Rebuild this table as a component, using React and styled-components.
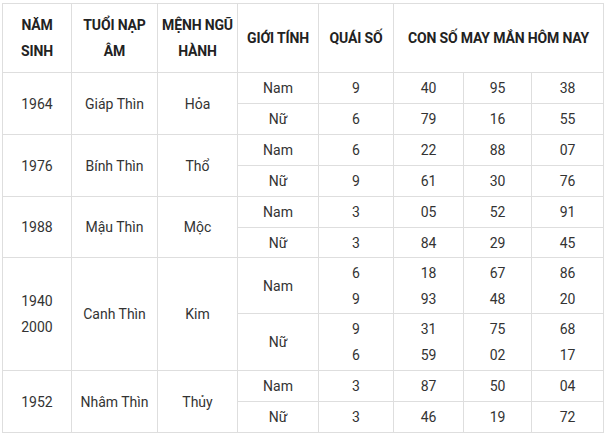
import styled, { createGlobalStyle } from "styled-components";

const GlobalStyle = createGlobalStyle`
  html, body {
    margin: 0;
    padding: 0;
    background: #fff;
  }
  body {
    font-family: Roboto, "Noto Sans", Arial, sans-serif;
  }
`;

const Page = styled.div`
  padding: 3px 0 0 2px;
`;

const Grid = styled.div`
  display: inline-grid;
  grid-template-columns: 68px 85px 79px 80px 74px 69px 67px 71px;
  grid-template-rows: 68px repeat(5, 30px) 29px 55px 56px 30px 30px;
  gap: 1px;
  padding: 1px;
  background: #dedede;
`;

const Cell = styled.div`
  background: #fff;
  display: flex;
  align-items: center;
  justify-content: center;
  text-align: center;
  font-size: 14px;
  line-height: 26px;
  color: #333;
  grid-row: ${(p) => (p.$rows ? `span ${p.$rows}` : "auto")};
  grid-column: ${(p) => (p.$cols ? `span ${p.$cols}` : "auto")};
`;

const HeadCell = styled(Cell)`
  font-weight: 700;
  color: #222;
  white-space: nowrap;
  letter-spacing: -0.15px;
`;

const headers = [
  ["NĂM", "SINH"],
  ["TUỔI NẠP", "ÂM"],
  ["MỆNH NGŨ", "HÀNH"],
  ["GIỚI TÍNH"],
  ["QUÁI SỐ"],
];

const groups = [
  {
    year: ["1964"],
    tuoi: "Giáp Thìn",
    menh: "Hỏa",
    rows: [
      { gender: "Nam", quai: ["9"], nums: [["40"], ["95"], ["38"]] },
      { gender: "Nữ", quai: ["6"], nums: [["79"], ["16"], ["55"]] },
    ],
  },
  {
    year: ["1976"],
    tuoi: "Bính Thìn",
    menh: "Thổ",
    rows: [
      { gender: "Nam", quai: ["6"], nums: [["22"], ["88"], ["07"]] },
      { gender: "Nữ", quai: ["9"], nums: [["61"], ["30"], ["76"]] },
    ],
  },
  {
    year: ["1988"],
    tuoi: "Mậu Thìn",
    menh: "Mộc",
    rows: [
      { gender: "Nam", quai: ["3"], nums: [["05"], ["52"], ["91"]] },
      { gender: "Nữ", quai: ["3"], nums: [["84"], ["29"], ["45"]] },
    ],
  },
  {
    year: ["1940", "2000"],
    tuoi: "Canh Thìn",
    menh: "Kim",
    rows: [
      {
        gender: "Nam",
        quai: ["6", "9"],
        nums: [
          ["18", "93"],
          ["67", "48"],
          ["86", "20"],
        ],
      },
      {
        gender: "Nữ",
        quai: ["9", "6"],
        nums: [
          ["31", "59"],
          ["75", "02"],
          ["68", "17"],
        ],
      },
    ],
  },
  {
    year: ["1952"],
    tuoi: "Nhâm Thìn",
    menh: "Thủy",
    rows: [
      { gender: "Nam", quai: ["3"], nums: [["87"], ["50"], ["04"]] },
      { gender: "Nữ", quai: ["3"], nums: [["46"], ["19"], ["72"]] },
    ],
  },
];

const Lines = ({ items }) => (
  <div>
    {items.map((t, i) => (
      <div key={i}>{t}</div>
    ))}
  </div>
);

export default function App() {
  return (
    <Page>
      <GlobalStyle />
      <Grid>
        {headers.map((h, i) => (
          <HeadCell key={i}>
            <Lines items={h} />
          </HeadCell>
        ))}
        <HeadCell $cols={3}>CON SỐ MAY MẮN HÔM NAY</HeadCell>

        {groups.map((g) => [
          <Cell key={g.year[0] + "y"} $rows={2}>
            <Lines items={g.year} />
          </Cell>,
          <Cell key={g.year[0] + "t"} $rows={2}>
            {g.tuoi}
          </Cell>,
          <Cell key={g.year[0] + "m"} $rows={2}>
            {g.menh}
          </Cell>,
          ...g.rows.flatMap((r) => [
            <Cell key={g.year[0] + r.gender}>{r.gender}</Cell>,
            <Cell key={g.year[0] + r.gender + "q"}>
              <Lines items={r.quai} />
            </Cell>,
            ...r.nums.map((n, i) => (
              <Cell key={g.year[0] + r.gender + i}>
                <Lines items={n} />
              </Cell>
            )),
          ]),
        ])}
      </Grid>
    </Page>
  );
}
